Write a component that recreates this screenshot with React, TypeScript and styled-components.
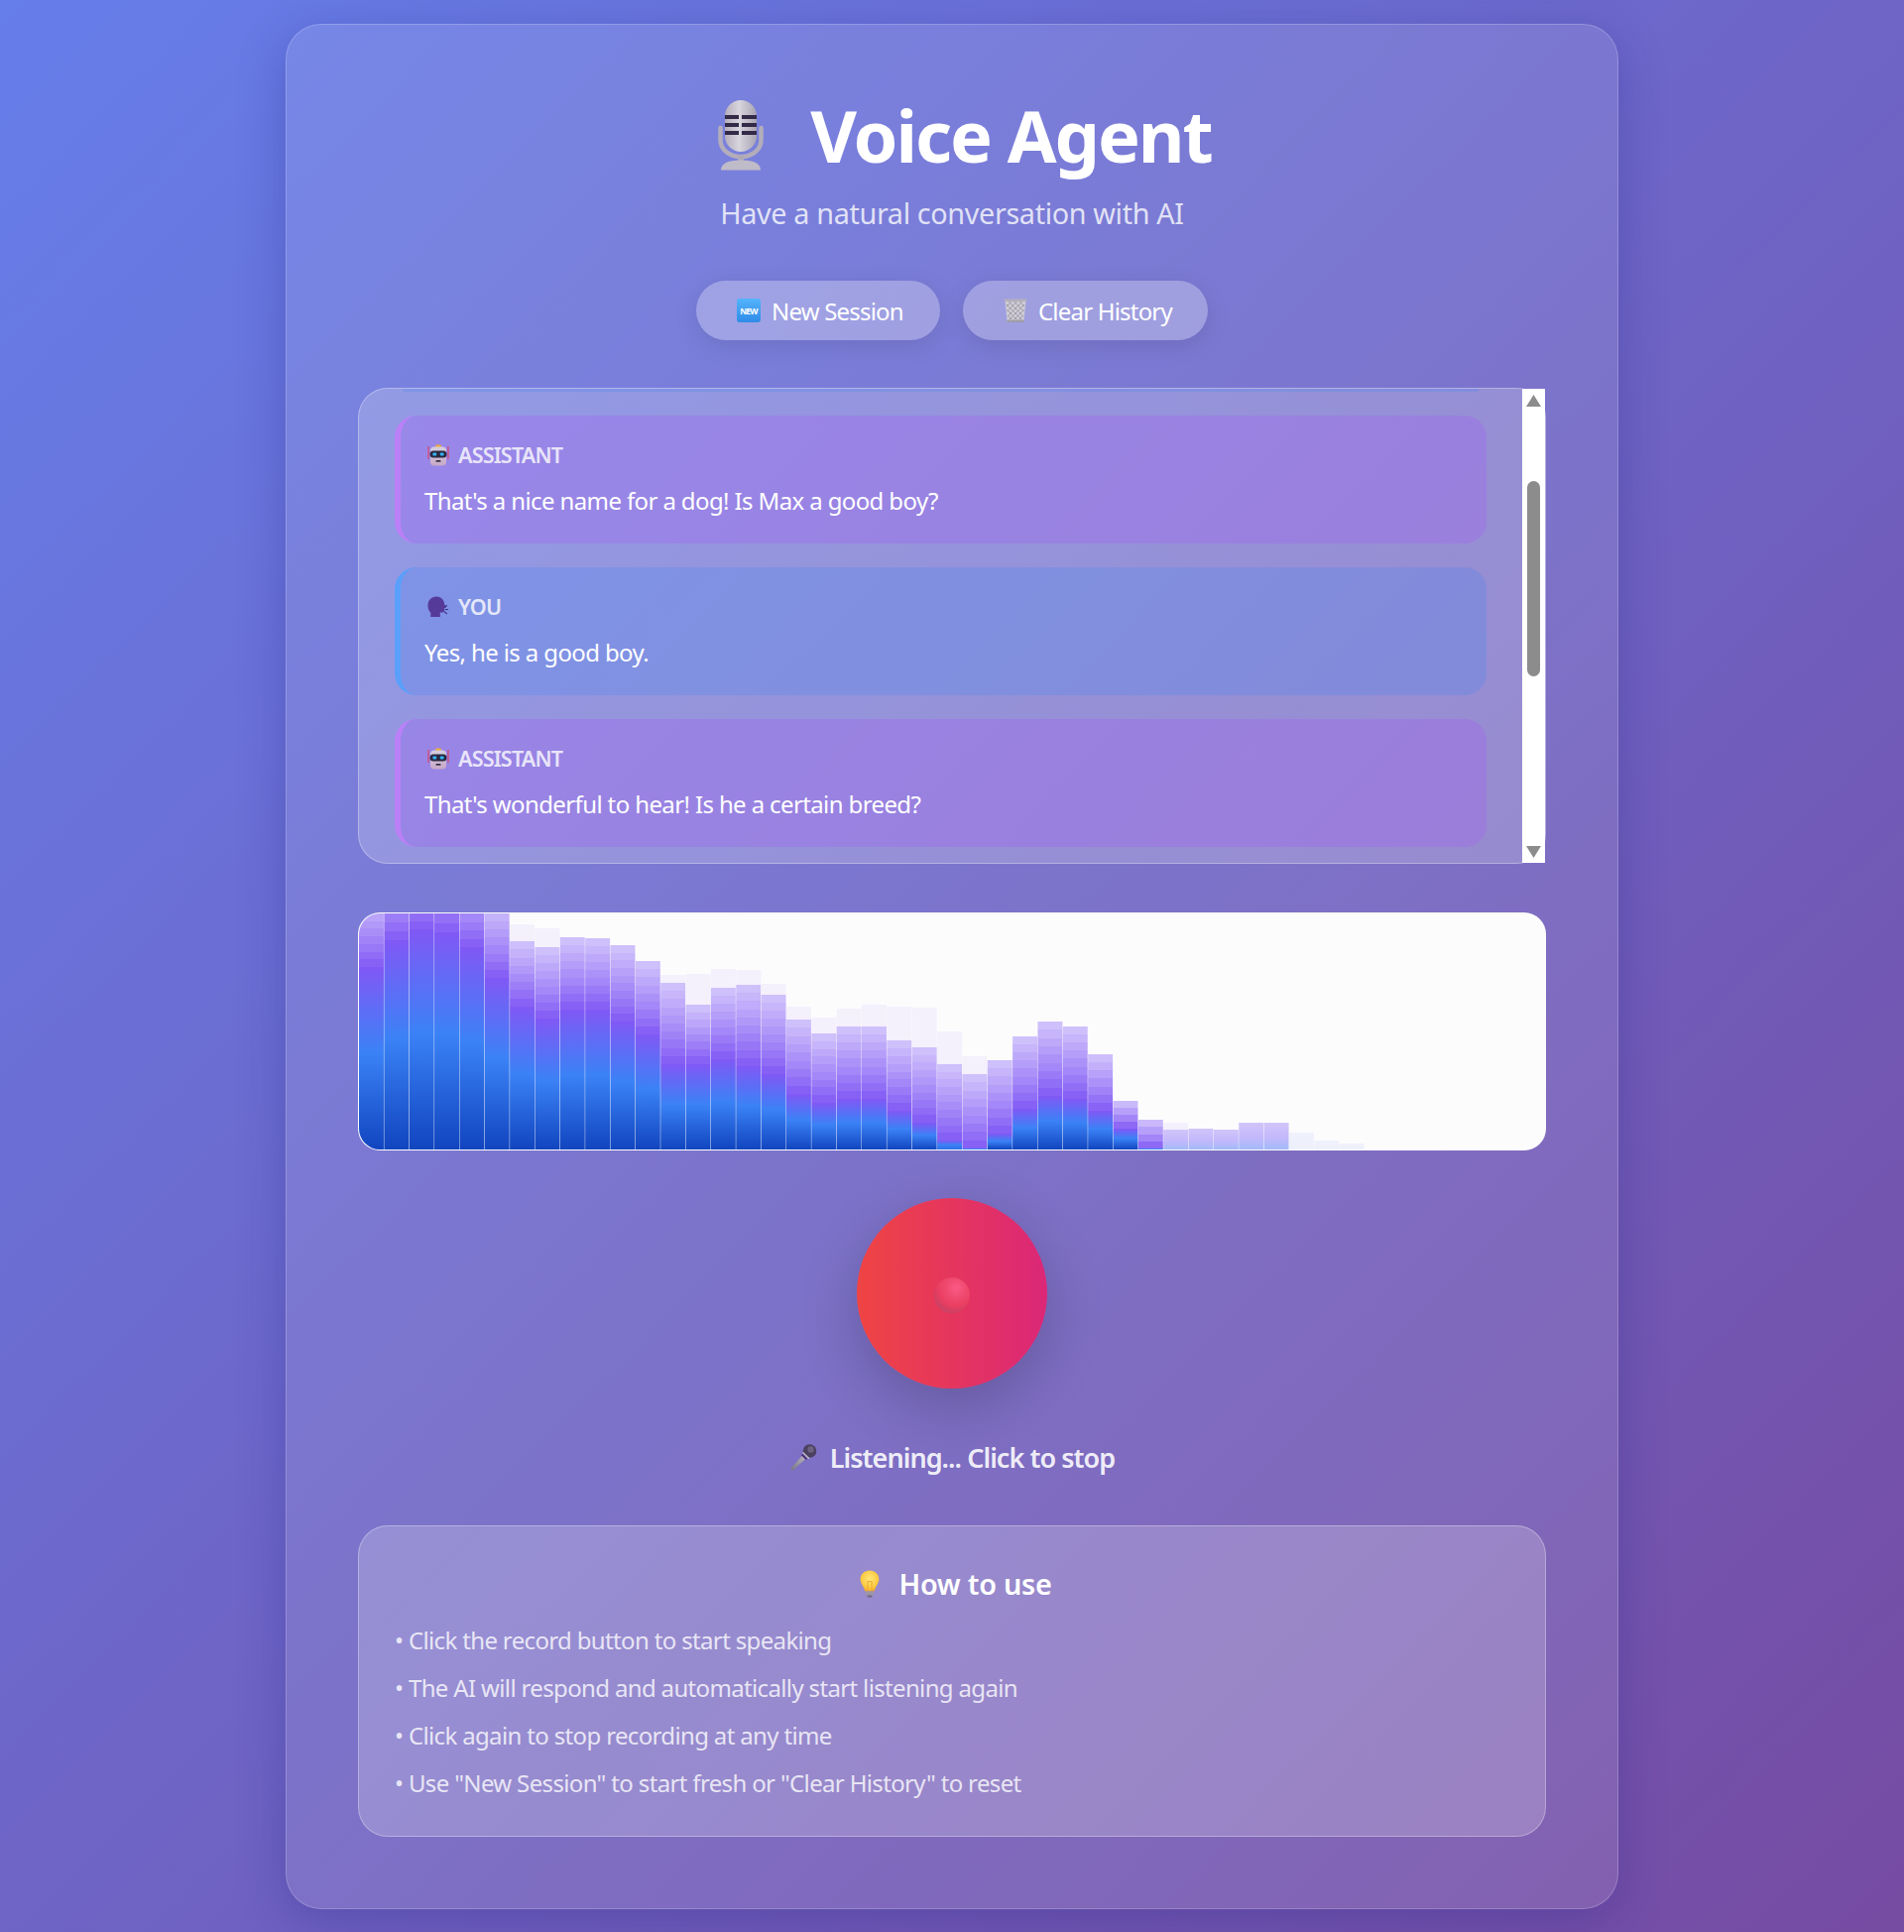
import React from "react";
import styled, { createGlobalStyle } from "styled-components";

const Global = createGlobalStyle`
  html, body { margin: 0; padding: 0; }
  body { font-family: "Noto Sans", "Open Sans", "Liberation Sans", sans-serif; color: #fff; }
  * { box-sizing: border-box; }
`;

const Page = styled.div`
  min-height: 1948px;
  padding: 24px 0 23px;
  background: linear-gradient(135deg, #667eea 0%, #764ba2 100%);
`;
const Card = styled.main`
  width: 1344px;
  margin: 0 auto;
  padding: 80px 72px 72px;
  background: rgba(255, 255, 255, 0.1);
  border: 1px solid rgba(255, 255, 255, 0.2);
  border-radius: 36px;
  box-shadow: 0 12px 48px rgba(31, 38, 135, 0.3);
`;
const Header = styled.header`
  display: flex;
  flex-direction: column;
  align-items: center;
`;
const TitleRow = styled.h1`
  display: flex;
  align-items: center;
  justify-content: center;
  gap: 21px;
  margin: 0;
  height: 62px;
  font-size: 72px;
  line-height: 62px;
  font-weight: 700;
  letter-spacing: -2.05px;
`;
const TitleIcon = styled.span`
  display: flex;
  justify-content: center;
  width: 98px;
`;
const Subtitle = styled.p`
  margin: 28px 0 0;
  font-size: 28.8px;
  line-height: 40px;
  letter-spacing: -0.37px;
  color: rgba(255, 255, 255, 0.78);
`;
const Actions = styled.div`
  display: flex;
  justify-content: center;
  gap: 23px;
  margin-top: 48px;
`;
const ActionButton = styled.button`
  display: flex;
  align-items: center;
  gap: 7px;
  height: 60px;
  width: ${(p: { $w: number }) => p.$w}px;
  padding: 0 0 0 36px;
  border: none;
  border-radius: 30px;
  background: rgba(255, 255, 255, 0.28);
  box-shadow: 0 6px 24px rgba(0, 0, 0, 0.1);
  color: #fff;
  font: 400 24px "Noto Sans", sans-serif;
  letter-spacing: -0.8px;
`;
const EmojiBox = styled.span`
  display: flex;
  align-items: center;
  justify-content: center;
  flex: none;
  width: ${(p: { $w: number }) => p.$w}px;
`;
const ChatPanel = styled.section`
  display: flex;
  height: 480px;
  margin-top: 48px;
  background: rgba(255, 255, 255, 0.2);
  border: 1px solid rgba(255, 255, 255, 0.3);
  border-radius: 30px;
`;
const ChatList = styled.div`
  flex: 1;
  min-width: 0;
  display: flex;
  flex-direction: column;
  gap: 24px;
  padding: 0 36px;
  overflow: hidden;
`;
const MessageSliver = styled.div`
  flex: none;
  height: 3px;
  margin: 0 8px 0 8px;
  border-radius: 0 0 12px 12px;
  background: rgba(59, 130, 246, 0.22);
`;
const Message = styled.article<{ $role: "user" | "assistant" }>`
  flex: none;
  height: 129px;
  padding: 24px 24px 25px 24px;
  border-left: 6px solid ${(p) => (p.$role === "user" ? "#5aa0fb" : "#bb80f7")};
  border-radius: 22px;
  background: ${(p) =>
    p.$role === "user" ? "rgba(59, 130, 246, 0.22)" : "rgba(168, 85, 247, 0.26)"};
`;
const MessageLabel = styled.div`
  display: flex;
  align-items: center;
  gap: 6px;
  height: 32px;
  line-height: 32px;
  font-size: 21.6px;
  font-weight: 600;
  letter-spacing: -0.85px;
  color: rgba(255, 255, 255, 0.8);
`;
const MessageText = styled.p`
  margin: 12px 0 0;
  font-size: 24px;
  line-height: 36px;
  letter-spacing: -0.62px;
  color: #fff;
`;
const ScrollTrack = styled.div`
  position: relative;
  flex: none;
  width: 23px;
  background: #fff;
`;
const ScrollArrow = styled.span<{ $dir: "up" | "down" }>`
  position: absolute;
  left: 4px;
  ${(p) => (p.$dir === "up" ? "top: 6px;" : "bottom: 5px;")}
  width: 15px;
  height: 12px;
  background: #8c8c8c;
  clip-path: ${(p) =>
    p.$dir === "up" ? "polygon(50% 0, 100% 100%, 0 100%)" : "polygon(0 0, 100% 0, 50% 100%)"};
`;
const ScrollThumb = styled.span`
  position: absolute;
  left: 5px;
  top: 93px;
  width: 13px;
  height: 197px;
  border-radius: 7px;
  background: #8c8c8c;
`;
const Wave = styled.div`
  height: 240px;
  margin-top: 49px;
  background: #fcfcfd;
  border: 1px solid rgba(255, 255, 255, 0.3);
  border-radius: 22px;
  overflow: hidden;
  svg { display: block; }
`;
const RecordWrap = styled.div`
  display: flex;
  justify-content: center;
  margin-top: 48px;
`;
const RecordButton = styled.button`
  display: flex;
  align-items: center;
  justify-content: center;
  width: 192px;
  height: 192px;
  border: none;
  border-radius: 50%;
  padding: 3px 0 0;
  background: linear-gradient(90deg, #ef4444 0%, #db2777 100%);
  box-shadow: 0 18px 60px rgba(0, 0, 0, 0.2);
`;
const RecordDot = styled.span`
  width: 36px;
  height: 36px;
  border-radius: 50%;
  background: radial-gradient(circle 29px at 62% 30%, #fb5a86 0%, #f04a70 35%, #ea3f62 62%, #d23f62 82%, #b84f72 100%);
`;
const Status = styled.div`
  display: flex;
  align-items: center;
  justify-content: center;
  gap: 13px;
  margin-top: 45px;
  height: 48px;
  font-size: 27px;
  font-weight: 600;
  letter-spacing: -0.95px;
  color: rgba(255, 255, 255, 0.9);
`;
const HelpPanel = styled.section`
  height: 314px;
  margin-top: 45px;
  padding: 36px 36px 0;
  background: rgba(255, 255, 255, 0.2);
  border: 1px solid rgba(255, 255, 255, 0.3);
  border-radius: 30px;
`;
const HelpTitle = styled.h3`
  display: flex;
  align-items: center;
  justify-content: center;
  gap: 11px;
  margin: 0 0 12px;
  height: 43px;
  font-size: 28.8px;
  font-weight: 600;
  letter-spacing: -0.25px;
`;
const HelpItem = styled.p`
  margin: 0;
  height: 48px;
  font-size: 24px;
  line-height: 48px;
  letter-spacing: -0.65px;
  color: rgba(255, 255, 255, 0.8);
`;

const StudioMic = () => (
  <svg width="48" height="72" viewBox="0 0 48 72">
    <defs>
      <linearGradient id="micBody" x1="0" y1="0" x2="1" y2="0">
        <stop offset="0" stopColor="#b4aebc" />
        <stop offset="0.45" stopColor="#d8d5de" />
        <stop offset="1" stopColor="#a8a3b2" />
      </linearGradient>
    </defs>
    <path d="M3.500 29v12c0 10 9 17 20.500 17s20.500-7 20.500-17V29" fill="none" stroke="#b3adbb" strokeWidth="4.500" strokeLinecap="round" />
    <rect x="21" y="56" width="6" height="6" fill="#aea9b7" />
    <path d="M4 71.500c0-6 6-10 20-10s20 4 20 10z" fill="#c0bbc8" />
    <rect x="8" y="1" width="32" height="52" rx="16" fill="url(#micBody)" />
    <path d="M8 16h14v4H8zM25 16h15v4H25zM8 24h14v4H8zM25 24h15v4H25zM8 32h14v4H8zM25 32h15v4H25z" fill="#332a48" />
  </svg>
);

const NewIcon = () => (
  <svg width="24" height="24" viewBox="0 0 24 24">
    <defs>
      <linearGradient id="newBg" x1="0" y1="0" x2="0" y2="1">
        <stop offset="0" stopColor="#54b4fb" />
        <stop offset="1" stopColor="#2f8be8" />
      </linearGradient>
    </defs>
    <rect width="24" height="24" rx="3" fill="url(#newBg)" />
    <text x="12" y="15.500" textAnchor="middle" fontFamily="'Noto Sans', sans-serif" fontSize="8.500" fontWeight="700" fill="#fff">NEW</text>
  </svg>
);

const TrashIcon = () => (
  <svg width="24" height="24" viewBox="0 0 24 24">
    <path d="M1.500 2h21l-2.200 21H3.700z" fill="#cfccd6" />
    <g stroke="#8f8a98" strokeWidth="0.7" fill="none">
      <path d="M3 8l5-5M3.500 13l10-10M4 18L19 3M5 22L21 6M10 22L20.500 11.500M15 22l5-5" />
      <path d="M21 8l-5-5M20.500 13l-10-10M20 18L5 3M19 22L3 6M14 22L3.500 11.500M9 22l-5-5" />
    </g>
    <rect x="0.500" y="0.500" width="23" height="2.600" rx="1" fill="#b4b0bc" />
    <rect x="3" y="21.800" width="18" height="2.200" rx="1" fill="#a09ca8" />
  </svg>
);

const RobotIcon = () => (
  <svg width="22" height="22" viewBox="0 0 22 22">
    <defs>
      <linearGradient id="robotHead" x1="0" y1="0" x2="0" y2="1">
        <stop offset="0" stopColor="#d5d0de" />
        <stop offset="1" stopColor="#c8a8c8" />
      </linearGradient>
    </defs>
    <path d="M1 2v13M21 2v13" stroke="#e0405e" strokeWidth="1.100" />
    <rect x="8" y="0.500" width="6" height="2.400" rx="1.200" fill="#eda93a" />
    <rect x="3" y="2.500" width="16" height="19" rx="4" fill="url(#robotHead)" />
    <rect x="2.500" y="6.500" width="17" height="7" rx="3.500" fill="#2a2840" />
    <rect x="5.400" y="8.500" width="3.800" height="3" rx="1" fill="#34b4f6" />
    <rect x="12.800" y="8.500" width="3.800" height="3" rx="1" fill="#34b4f6" />
    <rect x="8.500" y="16" width="5" height="1.800" rx="0.600" fill="#3a3248" />
  </svg>
);

const SpeakingHead = () => (
  <svg width="22" height="22" viewBox="0 0 22 22">
    <path d="M9 .5c4.600 0 7.600 3 7.900 6.600.1 1.300.9 2.400 1.700 3.500.4.600.1 1.100-.6 1.300l-1 .2.1 2.200c.1 1.400-.9 2.300-2.300 2.300h-2.200l.4 4.400H3.200l.2-4C1.600 15 .5 12.300.5 9.400.5 4 4.200.5 9 .5z" fill="#563a9a" />
    <path d="M18 13.500h2.500M17.500 16l2 1.600M17.500 11l2-1.400" stroke="#3f2f80" strokeWidth="1.200" strokeLinecap="round" />
  </svg>
);

const HandMic = () => (
  <svg width="28" height="27" viewBox="0 0 28 27">
    <defs>
      <linearGradient id="handle" x1="0" y1="1" x2="1" y2="0">
        <stop offset="0" stopColor="#77747f" />
        <stop offset="1" stopColor="#c0bcc6" />
      </linearGradient>
    </defs>
    <path d="M1.500 24.500 14.500 10l3.500 3.500L3.500 26.500c-1.200.6-2.600-.8-2-2z" fill="url(#handle)" />
    <circle cx="20.500" cy="7" r="6.800" fill="#4c4060" />
    <circle cx="21.500" cy="5.500" r="3.200" fill="#6d6280" />
    <path d="m13.500 8.500 6.500 6.300" stroke="#bdb8c6" strokeWidth="1.600" />
    <path d="m12.600 10.500 4.800 4.800" stroke="#4b2f7c" strokeWidth="2" />
  </svg>
);

const BulbIcon = () => (
  <svg width="22" height="28" viewBox="0 0 22 28">
    <defs>
      <radialGradient id="bulb" cx="0.5" cy="0.4" r="0.65">
        <stop offset="0" stopColor="#ffe67a" />
        <stop offset="0.7" stopColor="#fcc93f" />
        <stop offset="1" stopColor="#ee9d2a" />
      </radialGradient>
    </defs>
    <path d="M11 .5c5.200 0 9.400 3.900 9.400 8.800 0 4-3.400 7-4.700 12.200H6.300C5 16.300 1.600 13.300 1.600 9.300 1.600 4.400 5.800.5 11 .5z" fill="url(#bulb)" />
    <path d="M9 21v-9.500h4V21" fill="none" stroke="#e8a02a" strokeWidth="0.800" />
    <rect x="6.800" y="21.500" width="8.400" height="4" rx="1" fill="#9d96a6" />
    <rect x="8.500" y="25.500" width="5" height="2" rx="1" fill="#6f6979" />
  </svg>
);

// [solid top, ghost top, purple y], in px from canvas top
const raw: [number, number, number | null][] = [
  [0, 0, 54], [0, 0, 27], [0, 0, 16], [0, 0, 19], [0, 0, 34], [0, 0, 65],
  [28, 11, 94], [34, 15, 106], [24, 24, 97], [25, 25, 97], [32, 32, 109], [48, 48, 122],
  [70, 62, 152], [92, 61, 152], [75, 56, 147], [72, 57, 154], [82, 71, 162], [107, 94, 182],
  [121, 105, 191], [114, 96, 187], [114, 92, 187], [128, 94, 199], [135, 95, 211], [152, 119, 229],
  [162, 144, 237], [148, 148, 222], [124, 124, 197], [109, 109, 184], [114, 114, 187], [142, 142, 199],
  [189, 189, 217], [208, 208, 237], [218, 211, null], [217, 217, null], [218, 218, null], [211, 211, null],
  [211, 211, null], [221, 221, null], [229, 229, null], [232, 232, null],
];

const H = 238;
const PITCH = 25.35;

const mix = (t: number) => {
  const a = [0x81, 0x58, 0xf5];
  const b = [0xd2, 0xc5, 0xfb];
  return `rgb(${a.map((v, i) => Math.round(v + (b[i] - v) * t)).join(",")})`;
};

const barStops = (top: number, purple: number) => {
  const stops: { o: number; c: string }[] = [];
  const clipped = top === 0;
  const bandLen = clipped ? 75 : Math.max(purple - top, 1);
  const span = H - top;
  const steps = Math.max(2, Math.round((purple - top) / 8));
  for (let i = 0; i < steps; i++) {
    const y0 = top + ((purple - top) * i) / steps;
    const y1 = top + ((purple - top) * (i + 1)) / steps;
    const c = mix(Math.pow(Math.min(1, (purple - (y0 + y1) / 2) / bandLen), 0.9));
    stops.push({ o: (y0 - top) / span, c }, { o: (y1 - top) / span, c });
  }
  const blueY = H - (H - purple) * 0.53;
  stops.push({ o: (purple - top) / span, c: "#8158f5" });
  stops.push({ o: (blueY - top) / span, c: "#3b82f6" });
  stops.push({ o: 1, c: purple > 225 ? "#2f6ee8" : "#1145bf" });
  return stops;
};

const Waveform = () => (
  <svg width="1196" height={H} viewBox={`0 0 1196 ${H}`}>
    <defs>
      {raw.map(([top, , purple], i) => (
        <linearGradient key={i} id={`bar${i}`} x1="0" y1="0" x2="0" y2="1">
          {purple === null ? (
            <>
              <stop offset="0" stopColor={i >= 37 ? "#f0f1fc" : "#d2c5fb"} />
              <stop offset="0.55" stopColor={i >= 37 ? "#eef0fc" : "#c3b8fb"} />
              <stop offset="1" stopColor={i >= 37 ? "#eef1fc" : "#a3baf9"} />
            </>
          ) : (
            barStops(top, purple).map((s, k) => <stop key={k} offset={s.o} stopColor={s.c} />)
          )}
        </linearGradient>
      ))}
    </defs>
    {raw.map(([top, ghost], i) => (
      <g key={i}>
        {ghost < top && (
          <rect x={i * PITCH} y={ghost} width={PITCH - 0.4} height={top - ghost} fill="#f4f0fc" />
        )}
        <rect x={i * PITCH} y={top} width={PITCH - 0.4} height={H - top} fill={`url(#bar${i})`} />
      </g>
    ))}
  </svg>
);

const messages: { role: "user" | "assistant"; text: string }[] = [
  { role: "assistant", text: "That's a nice name for a dog! Is Max a good boy?" },
  { role: "user", text: "Yes, he is a good boy." },
  { role: "assistant", text: "That's wonderful to hear! Is he a certain breed?" },
];

const tips = [
  "• Click the record button to start speaking",
  "• The AI will respond and automatically start listening again",
  "• Click again to stop recording at any time",
  '• Use "New Session" to start fresh or "Clear History" to reset',
];

export default function App() {
  return (
    <Page>
      <Global />
      <Card>
        <Header>
          <TitleRow>
            <TitleIcon>
              <StudioMic />
            </TitleIcon>
            Voice Agent
          </TitleRow>
          <Subtitle>Have a natural conversation with AI</Subtitle>
        </Header>
        <Actions>
          <ActionButton $w={246}>
            <EmojiBox $w={33}>
              <NewIcon />
            </EmojiBox>
            New Session
          </ActionButton>
          <ActionButton $w={247}>
            <EmojiBox $w={33}>
              <TrashIcon />
            </EmojiBox>
            Clear History
          </ActionButton>
        </Actions>
        <ChatPanel>
          <ChatList>
            <MessageSliver />
            {messages.map((m, i) => (
              <Message key={i} $role={m.role}>
                <MessageLabel>
                  <EmojiBox $w={28}>{m.role === "user" ? <SpeakingHead /> : <RobotIcon />}</EmojiBox>
                  {m.role === "user" ? "YOU" : "ASSISTANT"}
                </MessageLabel>
                <MessageText>{m.text}</MessageText>
              </Message>
            ))}
          </ChatList>
          <ScrollTrack>
            <ScrollArrow $dir="up" />
            <ScrollThumb />
            <ScrollArrow $dir="down" />
          </ScrollTrack>
        </ChatPanel>
        <Wave>
          <Waveform />
        </Wave>
        <RecordWrap>
          <RecordButton aria-label="Stop recording">
            <RecordDot />
          </RecordButton>
        </RecordWrap>
        <Status>
          <HandMic />
          Listening... Click to stop
        </Status>
        <HelpPanel>
          <HelpTitle>
            <EmojiBox $w={36}>
              <BulbIcon />
            </EmojiBox>
            How to use
          </HelpTitle>
          {tips.map((t) => (
            <HelpItem key={t}>{t}</HelpItem>
          ))}
        </HelpPanel>
      </Card>
    </Page>
  );
}
